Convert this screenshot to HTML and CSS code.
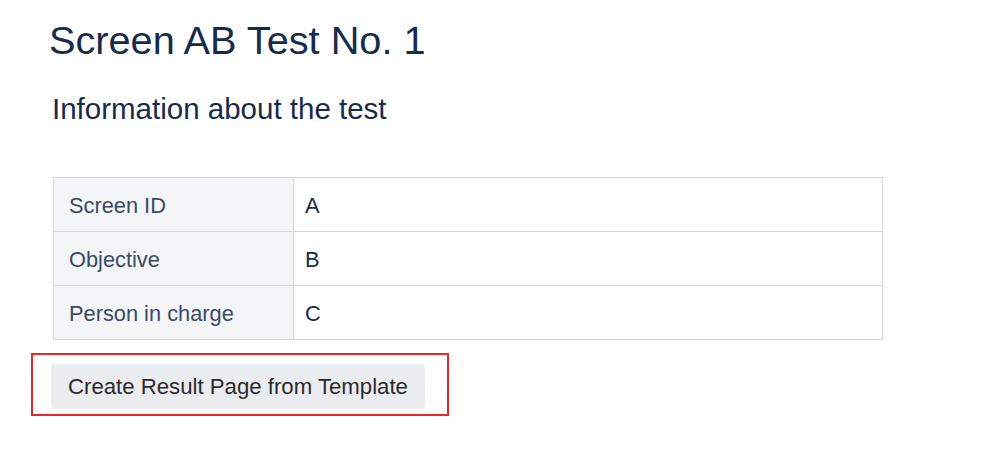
FILE: index.html
```html
<!DOCTYPE html>
<html lang="en">
<head>
<meta charset="utf-8">
<title>Screen AB Test No. 1</title>
<link rel="stylesheet" href="styles.css">
</head>
<body>
<main class="page">
  <h1 class="title">Screen AB Test No. 1</h1>
  <h2 class="subtitle">Information about the test</h2>
  <table class="info">
    <tbody>
      <tr><th>Screen ID</th><td>A</td></tr>
      <tr><th>Objective</th><td>B</td></tr>
      <tr><th>Person in charge</th><td>C</td></tr>
    </tbody>
  </table>
  <div class="highlight">
    <button class="btn" type="button">Create Result Page from Template</button>
  </div>
</main>
</body>
</html>
```
FILE: styles.css
```css
html, body {
  margin: 0;
  padding: 0;
  background: #ffffff;
}
body {
  font-family: "Liberation Sans", Arial, sans-serif;
  color: #172b4d;
}
.page {
  padding: 17px 0 0 0;
}
.title {
  margin: 0 0 0 49px;
  font-size: 39.7px;
  line-height: 46px;
  font-weight: 400;
  color: #172b4d;
}
.subtitle {
  margin: 28px 0 0 52px;
  font-size: 29.5px;
  line-height: 35px;
  font-weight: 400;
  color: #172b4d;
}
.info {
  margin: 51px 0 0 53px;
  width: 830px;
  border-collapse: collapse;
  font-size: 21.8px;
}
.info th,
.info td {
  height: 51px;
  padding: 2px 0 0 0;
  border: 1px solid #d3d7df;
  text-align: left;
  vertical-align: middle;
  font-weight: 400;
}
.info th {
  width: 224px;
  padding-left: 15px;
  background: #f4f5f7;
  color: #3b4a66;
}
.info td {
  padding-left: 11px;
  color: #172b4d;
}
.highlight {
  display: inline-block;
  margin: 13px 0 0 31px;
  padding: 9px 22px 5px 18px;
  border: 2px solid #e8282b;
}
.btn {
  display: block;
  height: 45px;
  padding: 1px 17px 0 17px;
  border: none;
  border-radius: 4px;
  background: #ebecf0;
  color: #2b2b2b;
  font-family: "Liberation Sans", Arial, sans-serif;
  font-size: 22.2px;
  cursor: pointer;
}
```
